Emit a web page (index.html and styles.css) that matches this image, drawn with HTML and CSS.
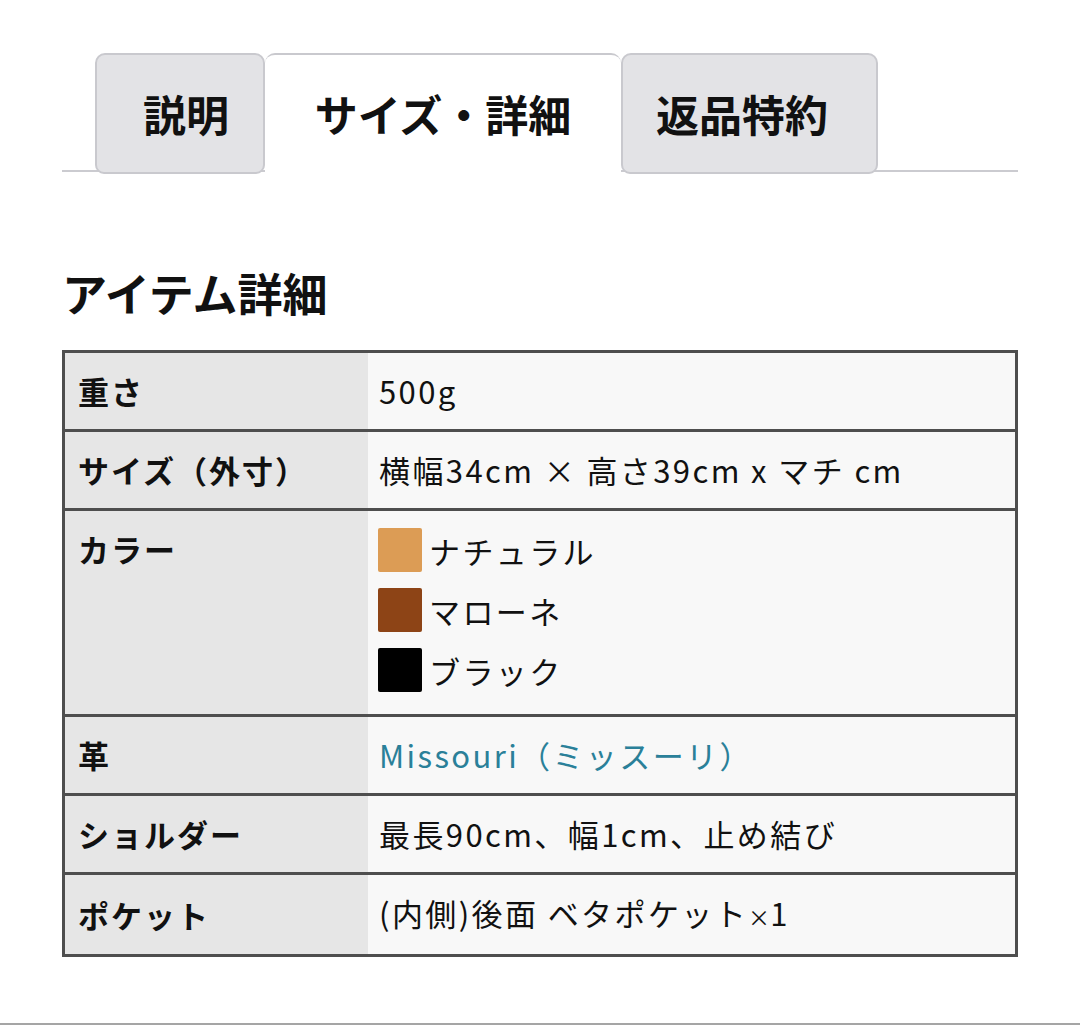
FILE: index.html
```html
<!DOCTYPE html>
<html lang="ja">
<head>
<meta charset="utf-8">
<link rel="stylesheet" href="styles.css">
</head>
<body>
<div class="page">
  <nav class="tabs">
    <div class="tab tab-first">説明</div>
    <div class="tab tab-active">サイズ・詳細</div>
    <div class="tab tab-last">返品特約</div>
  </nav>
  <h2 class="title">アイテム詳細</h2>
  <table class="spec">
    <tr><th>重さ</th><td>500g</td></tr>
    <tr><th>サイズ（外寸）</th><td>横幅34cm × 高さ39cm x マチ cm</td></tr>
    <tr class="top"><th>カラー</th><td>
      <ul class="colors">
        <li><span class="sw sw-natural"></span>ナチュラル</li>
        <li><span class="sw sw-marone"></span>マローネ</li>
        <li><span class="sw sw-black"></span>ブラック</li>
      </ul>
    </td></tr>
    <tr><th>革</th><td><a class="link" href="#">Missouri（ミッスーリ）</a></td></tr>
    <tr><th>ショルダー</th><td>最長90cm、幅1cm、止め結び</td></tr>
    <tr><th>ポケット</th><td>(内側)後面 ベタポケット<span class="small">×</span>1</td></tr>
  </table>
</div>
<div class="footer-line"></div>
</body>
</html>
```
FILE: styles.css
```css
html, body {
  margin: 0;
  padding: 0;
  background: #ffffff;
  font-family: "Noto Sans CJK JP", "Noto Sans", sans-serif;
  color: #111;
}
.page {
  padding: 53px 62px 0 62px;
  height: 970px;
  box-sizing: border-box;
}
.tabs {
  display: flex;
  padding-left: 33px;
  border-bottom: 2px solid #cbcbd0;
  height: 119px;
  box-sizing: border-box;
}
.tab {
  display: flex;
  flex-shrink: 0;
  align-items: center;
  justify-content: center;
  white-space: nowrap;
  height: 121px;
  box-sizing: border-box;
  padding: 0;
  font-size: 43px;
  font-weight: 700;
  background: #e3e3e6;
  border: 2px solid #c9c9ce;
  border-radius: 10px 10px 9px 9px;
  line-height: 1;
}
.tab-first {
  width: 170px;
  padding-left: 12px;
}
.tab-last {
  width: 257px;
  padding-right: 15px;
}
.tab-active {
  background: #fff;
  border-bottom-color: #fff;
  border-left: none;
  border-right: none;
  border-radius: 10px 10px 0 0;
  width: 356px;
  position: relative;
  z-index: 1;
}
.title {
  margin: 91px 0 27px;
  font-size: 45px;
  font-weight: 700;
  line-height: 60px;
  letter-spacing: 0;
}
.spec {
  width: 100%;
  border-collapse: collapse;
  border: 3px solid #4e4e4e;
  font-size: 31px;
  letter-spacing: 2px;
}
.spec th, .spec td {
  border-top: 3px solid #4e4e4e;
  border-bottom: 3px solid #4e4e4e;
  padding: 10px 12px;
  height: 56px;
  line-height: 56px;
  text-align: left;
  vertical-align: middle;
}
.spec th {
  width: 278px;
  padding-left: 13px;
  background: #e6e6e6;
  font-weight: 700;
}
.spec td {
  background: #f8f8f8;
  font-weight: 400;
  letter-spacing: 2.4px;
  padding-left: 11px;
}
.spec tr.top th, .spec tr.top td {
  vertical-align: top;
}
.colors {
  list-style: none;
  margin: 0;
  padding: 0 0 3px;
}
.colors li {
  display: flex;
  align-items: center;
  height: 60px;
  gap: 7px;
}
.sw {
  display: inline-block;
  width: 44px;
  height: 44px;
  border-radius: 2px;
  margin-left: -1px;
  margin-top: -3px;
}
.sw-natural { background: #dc9c55; }
.sw-marone { background: #8d4416; }
.sw-black { background: #000; }
.link {
  color: #2a8099;
  text-decoration: none;
}
.small {
  font-size: 22px;
  letter-spacing: 0;
}
.footer-line {
  margin-top: 53px;
  border-top: 2px solid #a5a5a5;
}
```
